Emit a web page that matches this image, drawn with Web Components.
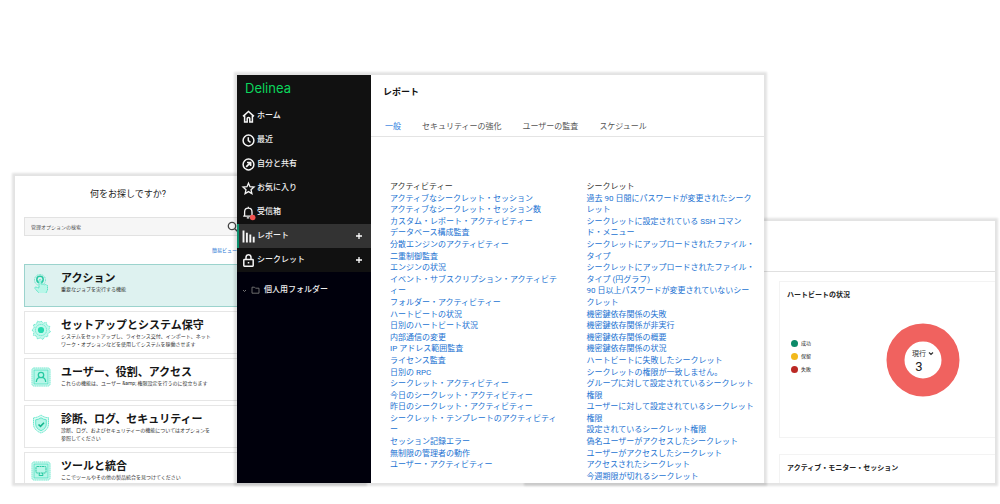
<!DOCTYPE html>
<html lang="ja">
<head>
<meta charset="utf-8">
<meta name="viewport" content="width=device-width, initial-scale=1">
<title>Delinea</title>
<style>
  body { margin: 0; background: #fff; font-family: Roboto, "Noto Sans CJK JP", sans-serif; font-size: 8px; color: #222; }
</style>
</head>
<body>
<product-stage></product-stage>

<script>
const define = (name, html) => customElements.define(name, class extends HTMLElement {
  connectedCallback() {
    if (this.shadowRoot) return;
    const t = document.createElement('template');
    t.innerHTML = '<style>*{box-sizing:border-box}</style>' + (typeof html === 'function' ? html(this) : html);
    this.attachShadow({ mode: 'open' }).append(t.content.cloneNode(true));
  }
});

const icons = {
  home: '<path d="M1 6.4 6.5 1.4 12 6.4M2.6 5.6V12H5.2V8.6Q5.2 7.4 6.5 7.4T7.8 8.6V12h2.6V5.6"/>',
  recent: '<circle cx="6.5" cy="6.5" r="5.4"/><path d="M6.3 3.2v3.5l2.2 1.6"/>',
  shared: '<circle cx="6.5" cy="6.5" r="5.4"/><path d="M4.2 8.8 8.2 4.8M5 4.5h3.6v3.6" stroke-width="1.7"/>',
  star: '<path d="m6.5 1.2 1.5 3.5 4 .4-3 2.6.9 3.9-3.400-2-3.400 2 .9-3.900-3-2.600 4-.400z" stroke-width="1.300"/>',
  bell: '<path d="M1.200 10.200h9.800M2.600 10V6q0-3.800 3.700-3.800T10 6v4M6.300.8v1.300M4.800 11.900h2.500" stroke-width="1.300"/><circle cx="10.700" cy="11.500" r="2.800" fill="#f0524f" stroke="none"/>',
  report: '<path d="M1.500 .5v12M4.900 2.800v9.700M8.300 4.500v8M11.700 6.800v5.700" stroke-width="1.900"/>',
  lock: '<rect x="1.800" y="5.400" width="9.400" height="6.800" rx=".6"/><path d="M4 5.200V3.600Q4 .8 6.500 .8T9 3.600v1.600M6.500 8v1.400"/>'
};

const tiles = {
  touch: '<g fill="none" stroke="#3fe0bd"><circle cx="9" cy="7" r="5.500" stroke-dasharray="1 .7" stroke-width=".8"/><circle cx="9" cy="6.500" r="3.200" stroke="#27c9a2" stroke-width="1.500"/><path d="M8 7v8l-3.200-1q-1.600.3-.8 1.600l4.500 5h6.200l1.800-3.600v-4.500l-2-1-1.200.3-1.500-.8-1.600.3V7q-1-1.400-2.200 0z" fill="#b8f6e8" stroke-dasharray="1.500 .4" stroke-width=".8"/></g>',
  gear: '<g fill="#c3f8ec" stroke="#49e2c1" stroke-width=".7" stroke-dasharray="1.400 .5"><path d="M10 1l2.300 2 3-.5.700 3 2.900 1-.9 2.900 1.500 2.500-2.600 1.700-.2 3-3 .2-1.700 2.700-2.600-1.500-3 .9-1-2.900-3-.7.400-3L1 10l2-2.300-.5-3 3-.7 1-2.900 2.500.9z"/><circle cx="10" cy="10" r="5.600"/></g><circle cx="10" cy="10" r="3.100" fill="#27d9ae"/>',
  user: '<g fill="#dffaf4" stroke="#49e2c1" stroke-width=".8"><rect x="1" y="1" width="18" height="18" rx="2" stroke-dasharray="1.500 .4"/><rect x="3" y="3" width="14" height="14" fill="#b8f6e8"/></g><g fill="none" stroke="#27c9a2" stroke-width="1.300"><circle cx="10" cy="8" r="2.700"/><path d="M5.300 15q.3-4 3.200-4.700M14.700 15q-.3-4-3.200-4.700"/></g>',
  shield: '<g fill="#dffaf4" stroke="#49e2c1" stroke-width=".8"><path d="M10 1q3.500 2.700 7.500 2.700V10q0 6-7.500 9Q2.500 16 2.500 10V3.700Q6.500 3.700 10 1z" stroke-dasharray="1.500 .4"/><path d="M10 3.800q2.500 1.800 5.300 2V10q0 4.500-5.300 6.700Q4.700 14.500 4.700 10V5.800q2.800-.2 5.300-2z" fill="#b8f6e8"/></g><path d="m7.500 10.500 2 1.800 3.500-3.500" fill="none" stroke="#14b58d" stroke-width="1.600"/>',
  tool: '<g fill="#dffaf4" stroke="#49e2c1" stroke-width=".8"><rect x="1" y="1" width="18" height="18" rx="2" stroke-dasharray="1.500 .4"/><rect x="3" y="3" width="14" height="14" fill="#b8f6e8"/></g><g fill="none" stroke="#27c9a2"><rect x="5" y="5.500" width="10" height="6.500" rx="1" stroke-dasharray="2 .5"/><path d="M8 14.500h4M8.500 12l-.5 2.500M11.500 12l.5 2.500"/></g>'
};

/* A floating window frame with a soft edge. */
define('app-window', `
  <style>
    :host { display: block; min-width: 0; min-height: 0; background: #fff; box-shadow: 0 0 2px 3px rgba(0,0,0,.11); }
    div { height: 100%; overflow: hidden; }
  </style>
  <div><slot></slot></div>`);

define('admin-card', el => `
  <style>
    :host { display: block; }
    a { display: flex; gap: 10px; height: 43px; padding: 8px 6px 0; border: 1px solid #e6e6e6; color: inherit; text-decoration: none; background: #fff; }
    :host([active]) a { background: #def2f0; border-color: #9bd3cd; }
    svg { width: 20px; height: 20px; flex: none; }
    h2 { margin: 0; font-size: 11px; line-height: 12px; font-weight: 700; color: #161616; white-space: nowrap; }
    p { margin: 0; font-size: 5px; line-height: 8px; color: #333; white-space: nowrap; }
  </style>
  <a href="#"><svg viewBox="0 0 20 20" aria-hidden="true">${tiles[el.getAttribute('icon')]}</svg>
  <span><h2>${el.getAttribute('heading')}</h2><p><slot></slot></p></span></a>`);

define('admin-search', `
  <style>
    :host { display: block; padding: 10px 0 0 9px; }
    h1 { margin: 0 0 0 66px; font-size: 9px; line-height: 16px; font-weight: 400; color: #222; }
    form { display: flex; align-items: center; height: 19px; margin-top: 15px; background: #f6f6f6; border: 1px solid #e2e2e2; }
    input { width: 200px; padding: 0 6px; border: 0; outline: 0; background: none; font: 5px/10px Roboto, "Noto Sans CJK JP", sans-serif; }
    input::placeholder { color: #555; opacity: 1; }
    button { width: 16px; height: 16px; padding: 0; border: 0; background: none; display: flex; align-items: center; justify-content: center; }
    .view { display: block; margin: 10px 0 0 188px; font-size: 5px; line-height: 8px; color: #2a77d4; text-decoration: none; }
    .cards { display: grid; gap: 4px; margin-top: 10px; }
  </style>
  <h1>何をお探しですか?</h1>
  <form role="search"><input type="text" aria-label="管理オプションの検索" placeholder="管理オプションの検索">
    <button type="button" aria-label="検索"><svg width="12" height="12" viewBox="0 0 12 12" fill="none" stroke="#444" stroke-width="1.300"><circle cx="5" cy="5" r="3.700"/><path d="m7.800 7.800 3.700 3.700"/></svg></button></form>
  <a class="view" href="#">簡易ビュー</a>
  <div class="cards">
    <admin-card active icon="touch" heading="アクション">重要なジョブを実行する機能</admin-card>
    <admin-card icon="gear" heading="セットアップとシステム保守">システムをセットアップし、ライセンス交付、インポート、ネット<br>ワーク・オプションなどを使用してシステムを稼働させます</admin-card>
    <admin-card icon="user" heading="ユーザー、役割、アクセス">これらの機能は、ユーザー &amp;amp; 権限設定を行うのに役立ちます</admin-card>
    <admin-card icon="shield" heading="診断、ログ、セキュリティー">診断、ログ、およびセキュリティーの機能についてはオプションを<br>参照してください</admin-card>
    <admin-card icon="tool" heading="ツールと統合">ここでツールやその他の製品統合を見つけてください</admin-card>
  </div>`);

define('nav-item', el => `
  <style>
    :host { display: block; }
    .row { display: flex; align-items: center; height: 24px; padding-right: 8px; border-left: 2px solid transparent; }
    :host([active]) .row { background: #333; border-color: #0c8f6c; }
    a { flex: 1; display: flex; align-items: center; gap: 2px; padding-left: 3px; color: #f2f2f2; text-decoration: none; font-size: 8px; line-height: 12px; font-weight: 500; }
    svg { overflow: visible; }
    button { display: flex; padding: 0; border: 0; background: none; }
  </style>
  <div class="row"><a href="#"><svg width="13" height="13" viewBox="0 0 13 13" fill="none" stroke="#f5f5f5" stroke-width="1.500" aria-hidden="true">${icons[el.getAttribute('icon')]}</svg><slot></slot></a>
  ${el.hasAttribute('addable') ? '<button type="button" aria-label="追加"><svg width="8" height="8" viewBox="0 0 8 8" stroke="#fff" stroke-width="1.300"><path d="M4 1v6M1 4h6"/></svg></button>' : ''}</div>`);

define('side-bar', `
  <style>
    :host { display: block; background: #00000c; color: #eee; }
    .top { background: #111; }
    .logo { display: block; padding: 5px 0 8px 8px; font: 400 13px/16px Inter, sans-serif; color: #0bd65c; text-decoration: none; }
    .folder { display: flex; align-items: center; gap: 4px; padding: 12px 0 0 5px; font-size: 8px; line-height: 12px; font-weight: 500; }
  </style>
  <div class="top">
    <a class="logo" href="#">Delinea</a>
    <nav>
      <nav-item icon="home">ホーム</nav-item>
      <nav-item icon="recent">最近</nav-item>
      <nav-item icon="shared">自分と共有</nav-item>
      <nav-item icon="star">お気に入り</nav-item>
      <nav-item icon="bell">受信箱</nav-item>
      <nav-item icon="report" active addable>レポート</nav-item>
      <nav-item icon="lock" addable>シークレット</nav-item>
    </nav>
  </div>
  <div class="folder"><svg width="5" height="5" viewBox="0 0 5 5" fill="none" stroke="#777"><path d="m1 2 1.500 1.500L4 2"/></svg>
    <svg width="9" height="8" viewBox="0 0 9 8" fill="none" stroke="#777" stroke-width=".9"><path d="M1 1.200h2.500l1 1H8v5H1z"/></svg>個人用フォルダー</div>`);

define('report-list', el => `
  <style>
    :host { display: block; font-size: 8px; line-height: 1.45; white-space: nowrap; }
    h2 { margin: 0; font-size: inherit; font-weight: 400; color: #333; }
    ul { margin: 0; padding: 0; list-style: none; }
    a { color: #2373d2; text-decoration: none; }
  </style>
  <h2>${el.getAttribute('heading')}</h2>
  <ul>${el.textContent.trim().split('\n').map(s => `<li><a href="#">${s.trim().replace('|', '<br>')}</a></li>`).join('')}</ul>`);

define('report-page', `
  <style>
    :host { display: grid; grid-template-columns: 134px minmax(0, 1fr); height: 100%; }
    h1 { margin: 0; padding: 9px 0 0 12px; font-size: 9px; line-height: 16px; font-weight: 700; color: #111; }
    .tabs { display: flex; gap: 21px; margin-top: 17px; padding: 0 14px; height: 20px; border-bottom: 1px solid #e4e4e4; }
    .tabs button { padding: 0; border: 0; background: none; font: 8px/12px Roboto, "Noto Sans CJK JP", sans-serif; color: #555; }
    .tabs button[aria-selected=true] { color: #2a7be0; }
    .lists { display: grid; grid-template-columns: 1fr 1fr; column-gap: 24px; padding: 44px 5px 0 19px; }
  </style>
  <side-bar></side-bar>
  <main>
    <h1>レポート</h1>
    <div class="tabs" role="tablist"><button role="tab" aria-selected="true">一般</button><button role="tab">セキュリティーの強化</button><button role="tab">ユーザーの監査</button><button role="tab">スケジュール</button></div>
    <div class="lists">
      <report-list heading="アクティビティー">
        アクティブなシークレット・セッション
        アクティブなシークレット・セッション数
        カスタム・レポート・アクティビティー
        データベース構成監査
        分散エンジンのアクティビティー
        二重制御監査
        エンジンの状況
        イベント・サブスクリプション・アクティビテ|ィー
        フォルダー・アクティビティー
        ハートビートの状況
        日別のハートビート状況
        内部通信の変更
        IP アドレス範囲監査
        ライセンス監査
        日別の RPC
        シークレット・アクティビティー
        今日のシークレット・アクティビティー
        昨日のシークレット・アクティビティー
        シークレット・テンプレートのアクティビティ|ー
        セッション記録エラー
        無制限の管理者の動作
        ユーザー・アクティビティー
      </report-list>
      <report-list heading="シークレット">
        過去 90 日間にパスワードが変更されたシーク|レット
        シークレットに設定されている SSH コマン|ド・メニュー
        シークレットにアップロードされたファイル・|タイプ
        シークレットにアップロードされたファイル・|タイプ (円グラフ)
        90 日以上パスワードが変更されていないシー|クレット
        機密鍵依存関係の失敗
        機密鍵依存関係が非実行
        機密鍵依存関係の概要
        機密鍵依存関係の状況
        ハートビートに失敗したシークレット
        シークレットの権限が一致しません。
        グループに対して設定されているシークレット|権限
        ユーザーに対して設定されているシークレット|権限
        設定されているシークレット権限
        偽名ユーザーがアクセスしたシークレット
        ユーザーがアクセスしたシークレット
        アクセスされたシークレット
        今週期限が切れるシークレット
      </report-list>
    </div>
  </main>`);

define('donut-chart', `
  <style>
    :host { display: grid; place-items: center; width: 74px; height: 74px; }
    svg.ring, .label { grid-area: 1 / 1; }
    .label { display: grid; justify-items: center; padding-top: 2px; }
    .pick { display: flex; align-items: center; gap: 1px; }
    select { appearance: none; width: 15px; padding: 0; border: 0; background: none; font: 7px/10px Roboto, "Noto Sans CJK JP", sans-serif; color: #333; }
    output { font-size: 13px; line-height: 15px; color: #222; margin-right: 8px; }
  </style>
  <svg class="ring" width="74" height="74" viewBox="0 0 74 74" aria-hidden="true"><circle cx="37" cy="37" r="27.500" fill="none" stroke="#f0625f" stroke-width="18"/></svg>
  <div class="label"><span class="pick"><select aria-label="期間"><option>現行</option></select><svg width="6" height="5" viewBox="0 0 6 5" fill="none" stroke="#333" stroke-width="1.200"><path d="m1 1.500 2 2 2-2"/></svg></span><output>3</output></div>`);

define('dash-panel', el => `
  <style>
    :host { display: block; border: 1px solid #f3f3f3; border-right: 0; padding: 7px 0 0 7px; }
    h2 { margin: 0; font-size: 7px; line-height: 12px; font-weight: 700; color: #222; }
  </style>
  <h2>${el.getAttribute('heading')}</h2><slot></slot>`);

define('dash-board', `
  <style>
    :host { display: block; height: 100%; }
    header { height: 51px; border-bottom: 1px solid #e0e0e0; }
    main { display: grid; grid-template-columns: 252fr 216fr; grid-template-rows: 157px 60px; row-gap: 16px; padding-top: 9px; }
    dash-panel { grid-column: 2; }
    .chart { display: flex; align-items: flex-start; gap: 74px; padding: 22px 0 0 4px; }
    ul { margin: 0; padding: 14px 0 0; list-style: none; width: 21px; }
    li { display: flex; align-items: center; gap: 3px; font-size: 5px; line-height: 13px; white-space: nowrap; color: #222; }
    i { width: 7px; height: 7px; border-radius: 50%; background: var(--dot); }
  </style>
  <header></header>
  <main>
    <dash-panel heading="ハートビートの状況"><div class="chart">
      <ul><li><i style="--dot:#0b8a68"></i>成功</li><li><i style="--dot:#f2b91b"></i>保留</li><li><i style="--dot:#bb2824"></i>失敗</li></ul>
      <donut-chart></donut-chart></div></dash-panel>
    <dash-panel heading="アクティブ・モニター・セッション"></dash-panel>
  </main>`);

/* Three overlapping windows share one grid; the middle one lies in front. */
define('product-stage', `
  <style>
    :host { display: grid; box-sizing: border-box; height: 100vh; padding: 75px 5px 21px 15px;
      grid-template-columns: 222fr 127fr 163fr 237fr 231fr; grid-template-rows: 101px 45px minmax(262px, 1fr); }
    .admin { grid-area: 2 / 1 / 4 / 3; }
    .board { grid-area: 3 / 4 / 4 / 6; }
    .report { grid-area: 1 / 2 / 4 / 5; z-index: 1; }
  </style>
  <app-window class="admin"><admin-search></admin-search></app-window>
  <app-window class="board"><dash-board></dash-board></app-window>
  <app-window class="report"><report-page></report-page></app-window>`);
</script>
</body>
</html>
